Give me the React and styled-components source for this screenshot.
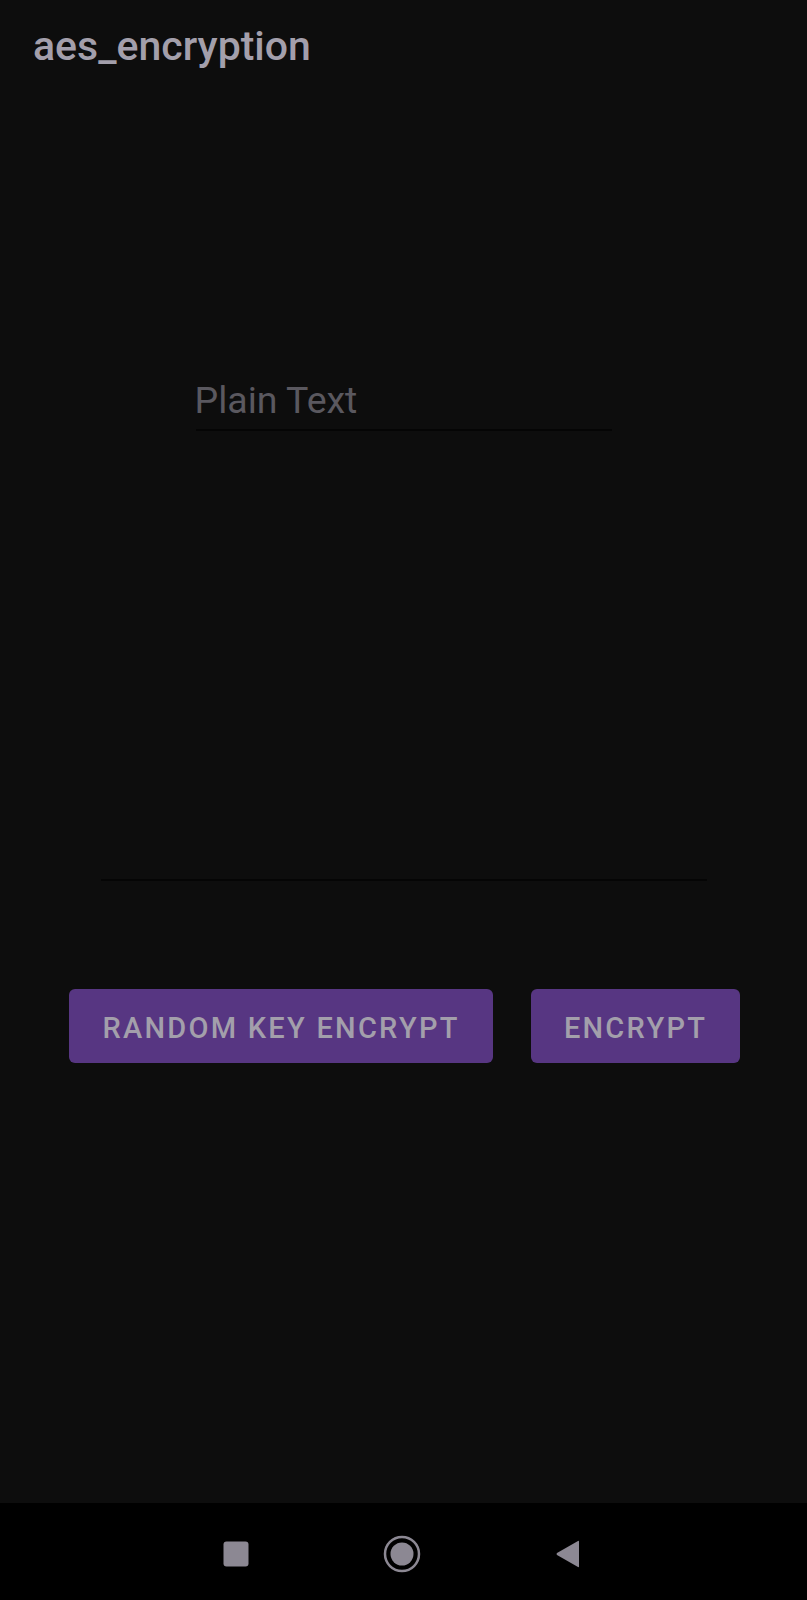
import styled, { createGlobalStyle } from "styled-components";

const GlobalStyle = createGlobalStyle`
  html, body {
    margin: 0;
    padding: 0;
    background-color: #0d0d0d;
  }
  * {
    box-sizing: border-box;
  }
`;

const Screen = styled.div`
  display: flex;
  flex-direction: column;
  width: 807px;
  height: 1600px;
  background-color: #0d0d0d;
  font-family: Roboto, "Noto Sans", sans-serif;
`;

const Main = styled.main`
  flex: 1;
  display: flex;
  flex-direction: column;
`;

const Title = styled.h1`
  margin: 0;
  padding: 22px 0 0 33px;
  font-size: 41px;
  line-height: 48px;
  font-weight: 500;
  color: #a39fab;
`;

const Content = styled.div`
  display: flex;
  flex-direction: column;
  align-items: center;
`;

const Field = styled.input`
  display: block;
  width: ${(p) => p.width}px;
  margin-top: ${(p) => p.top}px;
  height: 53px;
  padding: 0 0 7px 0;
  border: none;
  border-bottom: 2px solid #050505;
  background: transparent;
  outline: none;
  font-family: Roboto, sans-serif;
  font-size: 37.5px;
  line-height: 44px;
  text-indent: -1px;
  color: #a39fab;

  &::placeholder {
    color: #5a585f;
  }
`;

const ButtonRow = styled.div`
  display: flex;
  justify-content: center;
  gap: 38px;
  margin-top: 108px;
  padding-left: 2px;
`;

const Button = styled.button`
  width: ${(p) => p.width}px;
  height: 74px;
  padding: 3px 0 0;
  border: none;
  border-radius: 6px;
  background-color: #573682;
  color: #a39fab;
  font-family: Roboto, sans-serif;
  font-size: 29px;
  font-weight: 500;
  letter-spacing: 0.078em;
  text-transform: uppercase;
  cursor: pointer;
`;

const NavBar = styled.nav`
  height: 97px;
  background-color: #000;
  display: flex;
  align-items: center;
  justify-content: center;
  gap: 106px;
  padding-right: 4px;
`;

const NavSlot = styled.div`
  width: 60px;
  height: 60px;
  display: flex;
  align-items: center;
  justify-content: center;
  margin-top: 4px;
`;

const navColor = "#8c8893";

function App() {
  return (
    <Screen>
      <GlobalStyle />
      <Main>
        <Title>aes_encryption</Title>
        <Content>
          <Field width={416} top={308} placeholder="Plain Text" />
          <Field width={606} top={397} />
        </Content>
        <ButtonRow>
          <Button width={424}>Random Key Encrypt</Button>
          <Button width={209}>Encrypt</Button>
        </ButtonRow>
      </Main>
      <NavBar>
        <NavSlot>
          <svg width="26" height="26" viewBox="0 0 26 26">
            <rect x="0.5" y="0.5" width="25" height="25" rx="3" fill={navColor} />
          </svg>
        </NavSlot>
        <NavSlot>
          <svg width="38" height="38" viewBox="0 0 38 38">
            <circle cx="19" cy="19" r="17" fill="none" stroke={navColor} strokeWidth="2.5" />
            <circle cx="19" cy="19" r="11.5" fill={navColor} />
          </svg>
        </NavSlot>
        <NavSlot>
          <svg width="26" height="28" viewBox="0 0 26 28">
            <path d="M24 1.5 L24 26.5 Q24 27.5 23 27 L2 15 Q1 14 2 13 L23 1 Q24 0.5 24 1.5 Z" fill={navColor} />
          </svg>
        </NavSlot>
      </NavBar>
    </Screen>
  );
}

export default App;
